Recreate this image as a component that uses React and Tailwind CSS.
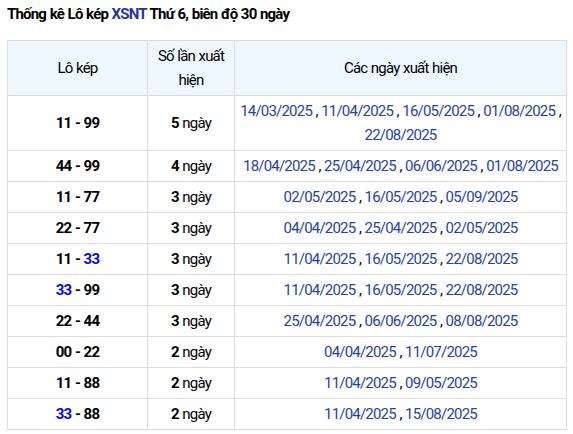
import React from "react";

const rows = [
  { a: "11", b: "99", n: 5, dates: ["14/03/2025", "11/04/2025", "16/05/2025", "01/08/2025", "22/08/2025"] },
  { a: "44", b: "99", n: 4, dates: ["18/04/2025", "25/04/2025", "06/06/2025", "01/08/2025"] },
  { a: "11", b: "77", n: 3, dates: ["02/05/2025", "16/05/2025", "05/09/2025"] },
  { a: "22", b: "77", n: 3, dates: ["04/04/2025", "25/04/2025", "02/05/2025"] },
  { a: "11", b: "33", n: 3, dates: ["11/04/2025", "16/05/2025", "22/08/2025"] },
  { a: "33", b: "99", n: 3, dates: ["11/04/2025", "16/05/2025", "22/08/2025"] },
  { a: "22", b: "44", n: 3, dates: ["25/04/2025", "06/06/2025", "08/08/2025"] },
  { a: "00", b: "22", n: 2, dates: ["04/04/2025", "11/07/2025"] },
  { a: "11", b: "88", n: 2, dates: ["11/04/2025", "09/05/2025"] },
  { a: "33", b: "88", n: 2, dates: ["11/04/2025", "15/08/2025"] },
];

function Num({ v }) {
  return <span className={v === "33" ? "text-[#0000ff]" : ""}>{v}</span>;
}

export default function App() {
  return (
    <div className="bg-white text-[15px] tracking-[-0.8px] [word-spacing:0.6px] leading-[24px] text-black" style={{ fontFamily: "Roboto, 'Liberation Sans', sans-serif" }}>
      <div className="px-[7px] pt-[2px] h-[40px] font-bold">
        Thống kê Lô kép <span className="text-[#2431ab]">XSNT</span> Thứ 6, biên độ 30 ngày
      </div>
      <div className="px-[7px]">
        <table className="w-[560px] border-collapse table-fixed text-center">
          <colgroup>
            <col className="w-[140px]" />
            <col className="w-[87px]" />
            <col />
          </colgroup>
          <thead>
            <tr className="bg-[#eef6fe]">
              <th className="border border-[#dddddd] px-[6px] py-[3px] font-normal">Lô kép</th>
              <th className="border border-[#dddddd] px-[6px] py-[3px] font-normal">Số lần xuất hiện</th>
              <th className="border border-[#dddddd] px-[6px] py-[3px] font-normal">Các ngày xuất hiện</th>
            </tr>
          </thead>
          <tbody>
            {rows.map((r, i) => (
              <tr key={i}>
                <td className="border border-[#dddddd] px-[6px] py-[3px] font-bold">
                  <Num v={r.a} /> - <Num v={r.b} />
                </td>
                <td className="border border-[#dddddd] px-[4px] py-[3px]">
                  <span className="font-bold">{r.n}</span> ngày
                </td>
                <td className="border border-[#dddddd] px-[4px] py-[3px]">
                  {r.dates.map((d, j) => (
                    <React.Fragment key={j}>
                      <span className="text-[#1d43ad]">{d}</span>
                      {j < r.dates.length - 1 ? " , " : ""}
                    </React.Fragment>
                  ))}
                </td>
              </tr>
            ))}
          </tbody>
        </table>
      </div>
    </div>
  );
}
